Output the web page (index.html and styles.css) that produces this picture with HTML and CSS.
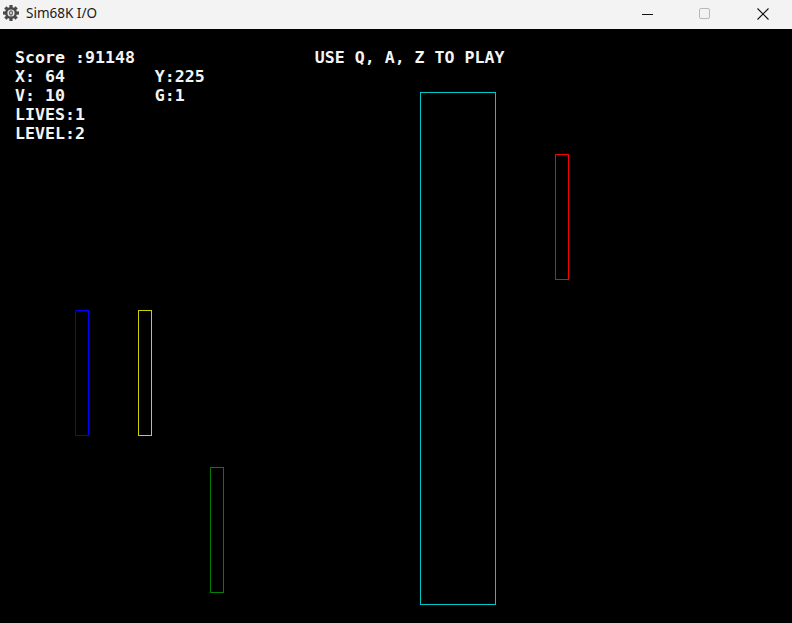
FILE: index.html
```html
<!DOCTYPE html>
<html>
<head>
<meta charset="utf-8">
<link rel="stylesheet" href="styles.css">
</head>
<body>
<div class="window">
  <div class="titlebar">
    <svg class="app-icon" width="18" height="18" viewBox="0 0 18 18">
      <g fill="#4a4a4a" transform="translate(9 9)">
        <rect x="-1.6" y="-8" width="3.2" height="16"/>
        <rect x="-1.6" y="-8" width="3.2" height="16" transform="rotate(45)"/>
        <rect x="-1.6" y="-8" width="3.2" height="16" transform="rotate(90)"/>
        <rect x="-1.6" y="-8" width="3.2" height="16" transform="rotate(135)"/>
        <circle r="6"/>
        <circle r="3.6" fill="#e8e8e8"/>
        <ellipse rx="1.4" ry="2.2" fill="none" stroke="#4a4a4a" stroke-width="1.1"/>
      </g>
    </svg>
    <span class="title">Sim68K I/O</span>
    <div class="controls">
      <div class="ctrl">
        <svg width="12" height="12" viewBox="0 0 12 12"><line x1="0" y1="6.5" x2="11" y2="6.5" stroke="#111" stroke-width="1"/></svg>
      </div>
      <div class="ctrl">
        <svg width="12" height="12" viewBox="0 0 12 12"><rect x="0.5" y="0.5" width="10" height="10" rx="1.5" fill="none" stroke="#b8b8b8" stroke-width="1"/></svg>
      </div>
      <div class="ctrl">
        <svg width="12" height="12" viewBox="0 0 12 12"><path d="M0.5 0.5 L11.5 11.5 M11.5 0.5 L0.5 11.5" stroke="#111" stroke-width="1.1"/></svg>
      </div>
    </div>
  </div>
  <div class="screen">
    <pre class="hud">Score :91148                  USE Q, A, Z TO PLAY
X: 64         Y:225
V: 10         G:1
LIVES:1
LEVEL:2</pre>
    <svg class="playfield" width="792" height="594" viewBox="0 0 792 594">
      <rect class="bar cyan" x="420.5" y="63.5" width="75" height="512"/>
      <rect class="bar red" x="555.5" y="125.5" width="13" height="125"/>
      <rect class="bar blue" x="75.5" y="281.5" width="13" height="125"/>
      <rect class="bar yellow" x="138.5" y="281.5" width="13" height="125"/>
      <rect class="bar green" x="210.5" y="438.5" width="13" height="125"/>
    </svg>
  </div>
</div>
</body>
</html>
```
FILE: styles.css
```css
html, body {
  margin: 0;
  padding: 0;
  background: #000;
}
.window {
  width: 792px;
  height: 623px;
  display: flex;
  flex-direction: column;
  overflow: hidden;
}
.titlebar {
  height: 29px;
  flex: none;
  background: #f3f3f3;
  display: flex;
  align-items: center;
  padding-left: 2px;
  box-sizing: border-box;
}
.app-icon {
  flex: none;
  margin-top: -4px;
}
.title {
  margin-left: 6px;
  margin-top: -3px;
  font-family: "Noto Sans", "Open Sans", sans-serif;
  font-size: 13.5px;
  color: #1a1a1a;
}
.controls {
  margin-left: auto;
  display: flex;
  height: 100%;
}
.ctrl {
  width: 58px;
  display: flex;
  align-items: center;
  justify-content: center;
  padding-bottom: 2px;
  box-sizing: border-box;
}
.ctrl:nth-child(1) { margin-right: -1px; }
.screen {
  position: relative;
  flex: 1;
  background: #000;
}
.hud {
  margin: 0;
  padding: 19px 0 0 15px;
  font-family: "DejaVu Sans Mono", "Liberation Mono", monospace;
  font-weight: bold;
  font-size: 16.6px;
  line-height: 19px;
  color: #f4f4f4;
}
.playfield {
  position: absolute;
  left: 0;
  top: 0;
}
.bar {
  fill: none;
  stroke-width: 1;
}
.cyan { stroke: #00c8c8; }
.red { stroke: #ff0000; }
.blue { stroke: #0000ff; }
.yellow { stroke: #d0d000; }
.green { stroke: #008000; }
```
